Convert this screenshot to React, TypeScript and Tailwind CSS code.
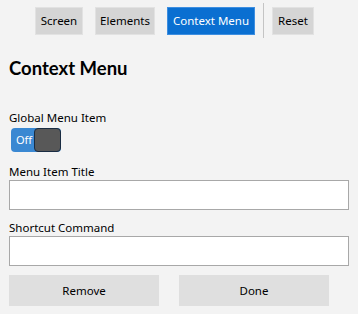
import React from "react";

const font = { fontFamily: '"Segoe UI", "Noto Sans", sans-serif' };
const headingFont = { fontFamily: '"Segoe UI", Lato, sans-serif' };

function TabButton({ label, width, active }: { label: string; width: string; active?: boolean }) {
  return (
    <button
      type="button"
      className={
        (active
          ? "border-[#3d8ee0] bg-[#0a6fd1] text-white"
          : "border-[#e2e2e2] bg-[#d5d5d5] text-black") +
        " flex h-[28px] items-center justify-center border text-[11.5px] " +
        width
      }
    >
      {label}
    </button>
  );
}

function Field({ label }: { label: string }) {
  return (
    <div className="flex flex-col">
      <label className="text-[11.5px] leading-[16px] text-black">{label}</label>
      <input
        type="text"
        className="h-[30px] w-[340px] border border-[#a8a8a8] bg-white px-2 text-[12px] outline-none"
      />
    </div>
  );
}

export default function App() {
  return (
    <div className="h-[314px] w-[358px] overflow-hidden bg-[#f3f3f3]" style={font}>
      <div className="flex items-center pt-[3px] pl-[35px]">
        <div className="flex items-center gap-[12px]">
          <TabButton label="Screen" width="w-[48px]" />
          <TabButton label="Elements" width="w-[60px]" />
          <TabButton label="Context Menu" width="w-[88px]" active />
        </div>
        <div className="mx-[8px] h-[35px] w-px bg-[#c4c4c4]" />
        <TabButton label="Reset" width="w-[42px]" />
      </div>

      <div className="px-[9px]">
        <h1
          className="mt-[16px] text-[18.5px] font-bold leading-[28px] text-black"
          style={headingFont}
        >
          Context Menu
        </h1>

        <div className="mt-[28px] flex flex-col">
          <span className="text-[11.5px] leading-[16px] text-black">Global Menu Item</span>
          <button
            type="button"
            className="mt-[2px] ml-[2px] flex h-[24px] w-[50px] items-center rounded-[4px] bg-[#3a88d2] pl-[5px]"
          >
            <span className="text-[11px] text-white">Off</span>
            <span className="ml-auto h-[24px] w-[27px] rounded-[4px] border border-[#1a2c42] bg-[#585858]" />
          </button>
        </div>

        <div className="mt-[12px] flex flex-col gap-[10px]">
          <Field label="Menu Item Title" />
          <Field label="Shortcut Command" />
        </div>

        <div className="mt-[9px] flex gap-[20px]">
          <button
            type="button"
            className="h-[31px] w-[150px] bg-[#dfdfdf] text-[11.5px] text-black"
          >
            Remove
          </button>
          <button
            type="button"
            className="h-[31px] w-[150px] bg-[#dfdfdf] text-[11.5px] text-black"
          >
            Done
          </button>
        </div>
      </div>
    </div>
  );
}
